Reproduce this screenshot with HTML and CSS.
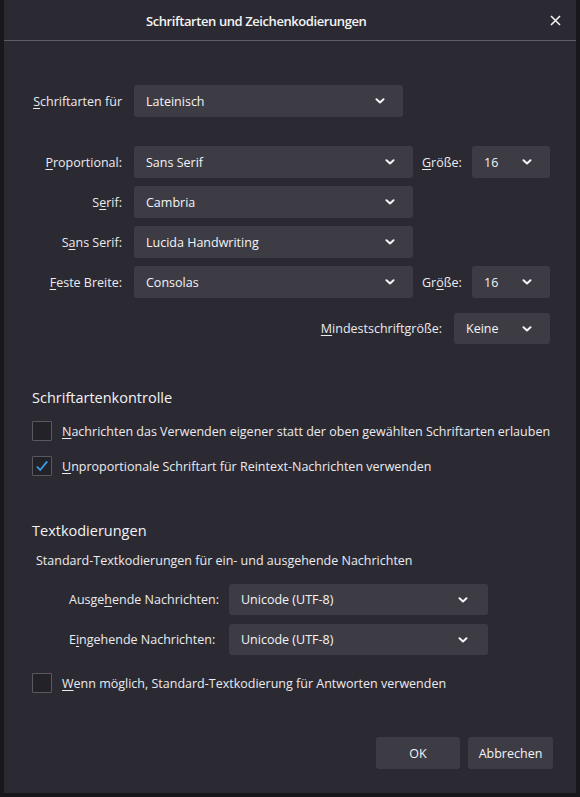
FILE: index.html
```html
<!DOCTYPE html>
<html lang="de">
<head>
<meta charset="utf-8">
<title>Schriftarten und Zeichenkodierungen</title>
<link rel="stylesheet" href="styles.css">
</head>
<body>
<div class="dialog">
  <header class="titlebar">
    <h1 class="title">Schriftarten und Zeichenkodierungen</h1>
    <button class="close" aria-label="Schließen">
      <svg width="11" height="11" viewBox="0 0 11 11"><path d="M1 1L10 10M10 1L1 10" stroke="#f2f2f4" stroke-width="1.6" fill="none"/></svg>
    </button>
  </header>

  <main class="content">
    <div class="lang-row">
      <label class="lbl"><u>S</u>chriftarten für</label>
      <div class="select narrow"><span>Lateinisch</span><svg class="chev" viewBox="0 0 10 6"><path d="M1.5 1.2L5 4.4L8.5 1.2" /></svg></div>
    </div>

    <div class="font-grid">
      <label class="lbl"><u>P</u>roportional:</label>
      <div class="select"><span>Sans Serif</span><svg class="chev" viewBox="0 0 10 6"><path d="M1.5 1.2L5 4.4L8.5 1.2" /></svg></div>
      <label class="lbl size"><u>G</u>röße:</label>
      <div class="select"><span>16</span><svg class="chev" viewBox="0 0 10 6"><path d="M1.5 1.2L5 4.4L8.5 1.2" /></svg></div>

      <label class="lbl">S<u>e</u>rif:</label>
      <div class="select"><span>Cambria</span><svg class="chev" viewBox="0 0 10 6"><path d="M1.5 1.2L5 4.4L8.5 1.2" /></svg></div>
      <div></div><div></div>

      <label class="lbl">S<u>a</u>ns Serif:</label>
      <div class="select"><span>Lucida Handwriting</span><svg class="chev" viewBox="0 0 10 6"><path d="M1.5 1.2L5 4.4L8.5 1.2" /></svg></div>
      <div></div><div></div>

      <label class="lbl"><u>F</u>este Breite:</label>
      <div class="select"><span>Consolas</span><svg class="chev" viewBox="0 0 10 6"><path d="M1.5 1.2L5 4.4L8.5 1.2" /></svg></div>
      <label class="lbl size">Gr<u>ö</u>ße:</label>
      <div class="select"><span>16</span><svg class="chev" viewBox="0 0 10 6"><path d="M1.5 1.2L5 4.4L8.5 1.2" /></svg></div>
    </div>

    <div class="min-row">
      <label class="lbl"><u>M</u>indestschriftgröße:</label>
      <div class="select min"><span>Keine</span><svg class="chev" viewBox="0 0 10 6"><path d="M1.5 1.2L5 4.4L8.5 1.2" /></svg></div>
    </div>

    <section class="section control">
      <h2 class="heading">Schriftartenkontrolle</h2>
      <div class="check-row">
        <span class="box"></span>
        <span class="check-text"><u>N</u>achrichten das Verwenden eigener statt der oben gewählten Schriftarten erlauben</span>
      </div>
      <div class="check-row">
        <span class="box"><svg width="16" height="16" viewBox="0 0 16 16"><path d="M3 8.6L6.2 12L13.2 3.4" stroke="#3a9fe0" stroke-width="1.8" fill="none"/></svg></span>
        <span class="check-text"><u>U</u>nproportionale Schriftart für Reintext-Nachrichten verwenden</span>
      </div>
    </section>

    <section class="section encoding">
      <h2 class="heading">Textkodierungen</h2>
      <p class="desc">Standard-Textkodierungen für ein- und ausgehende Nachrichten</p>
      <div class="enc-grid">
        <label class="lbl left">Ausge<u>h</u>ende Nachrichten:</label>
        <div class="select enc"><span>Unicode (UTF-8)</span><svg class="chev" viewBox="0 0 10 6"><path d="M1.5 1.2L5 4.4L8.5 1.2" /></svg></div>
        <label class="lbl left">E<u>i</u>ngehende Nachrichten:</label>
        <div class="select enc"><span>Unicode (UTF-8)</span><svg class="chev" viewBox="0 0 10 6"><path d="M1.5 1.2L5 4.4L8.5 1.2" /></svg></div>
      </div>
      <div class="check-row reply">
        <span class="box"></span>
        <span class="check-text"><u>W</u>enn möglich, Standard-Textkodierung für Antworten verwenden</span>
      </div>
    </section>
  </main>

  <footer class="buttons">
    <button class="btn ok">OK</button>
    <button class="btn">Abbrechen</button>
  </footer>
</div>
</body>
</html>
```

FILE: styles.css
```css
* { box-sizing: border-box; }

html, body {
  margin: 0;
  padding: 0;
}

body {
  width: 580px;
  height: 797px;
  overflow: hidden;
  background: #18171c;
  font-family: "Open Sans", "Noto Sans", sans-serif;
  font-size: 12.5px;
  color: #ebebee;
}

u {
  text-decoration: underline;
  text-underline-offset: 2px;
}

.dialog {
  margin-left: 4px;
  width: 572px;
  height: 793px;
  background: #2b2a33;
  display: flex;
  flex-direction: column;
}

/* title bar */
.titlebar {
  height: 41px;
  flex: none;
  display: flex;
  align-items: center;
  padding-left: 142px;
  padding-right: 10px;
  padding-top: 1px;
  border-bottom: 1px solid #5f5e66;
}

.title {
  margin: 0;
  font-size: 13px;
  font-weight: 600;
  color: #f3f3f5;
  letter-spacing: -0.42px;
}

.close {
  margin-left: auto;
  width: 22px;
  height: 22px;
  border: 0;
  padding: 0;
  background: none;
  display: flex;
  align-items: center;
  justify-content: center;
}

.content {
  flex: 1;
  padding: 0 28px;
}

/* font selection rows */
.lang-row {
  margin: 44px 0 0 -28px;
  display: grid;
  grid-template-columns: 130px 269px;
  height: 32px;
}

.font-grid {
  margin: 29px 0 0 -28px;
  display: grid;
  grid-template-columns: 130px 279px 59px 78px;
  grid-auto-rows: 32px;
  row-gap: 8px;
}

.lbl {
  display: flex;
  align-items: center;
  justify-content: flex-end;
  padding-right: 12px;
  white-space: nowrap;
}

.lbl.size {
  justify-content: flex-start;
  padding-left: 9px;
  padding-right: 0;
}

.lbl.left {
  justify-content: flex-start;
  padding-right: 0;
}

.select {
  height: 32px;
  background: #3d3c45;
  border-radius: 3px;
  display: flex;
  align-items: center;
  justify-content: space-between;
  padding: 0 18px 0 12px;
  color: #f4f4f6;
}

.chev {
  width: 10px;
  height: 6px;
  flex: none;
}

.chev path {
  fill: none;
  stroke: #f4f4f6;
  stroke-width: 2;
  stroke-linecap: round;
  stroke-linejoin: round;
}

.min-row {
  display: flex;
  justify-content: flex-end;
  align-items: center;
  margin: 15px -2px 0 0;
  height: 31px;
}

.min-row .lbl { height: 31px; }

.select.min {
  width: 96px;
  height: 31px;
}

/* sections */
.section { margin: 0; }

.heading {
  margin: 0;
  font-size: 14.5px;
  font-weight: 400;
  line-height: 20px;
  color: #f3f3f5;
}

.control { margin-top: 44px; }
.control .heading { margin-bottom: 13px; }

.check-row {
  display: flex;
  align-items: center;
  gap: 10px;
  height: 20px;
}

.check-row + .check-row { margin-top: 15px; }

.box {
  width: 20px;
  height: 20px;
  flex: none;
  border: 1px solid #595860;
  background: #232229;
  border-radius: 1px;
  display: flex;
  align-items: center;
  justify-content: center;
}

.check-text { white-space: nowrap; }

.encoding { margin-top: 45px; }

.desc {
  margin: 10px 0 0 4px;
  line-height: 20px;
}

.enc-grid {
  margin: 13px 0 0 37px;
  display: grid;
  grid-template-columns: 160px 259px;
  grid-auto-rows: 31px;
  row-gap: 9px;
}

.select.enc { height: 31px; padding-right: 20px; }

.reply { margin-top: 18px; }

/* dialog buttons */
.buttons {
  flex: none;
  display: flex;
  justify-content: flex-end;
  gap: 8px;
  padding: 0 23px 24px 0;
}

.btn {
  height: 32px;
  border: 0;
  border-radius: 3px;
  background: #3d3c45;
  color: #f4f4f6;
  font-family: inherit;
  font-size: 12.5px;
  padding: 0;
}

.btn.ok { width: 84px; }
.btn:not(.ok) { width: 85px; }
```
